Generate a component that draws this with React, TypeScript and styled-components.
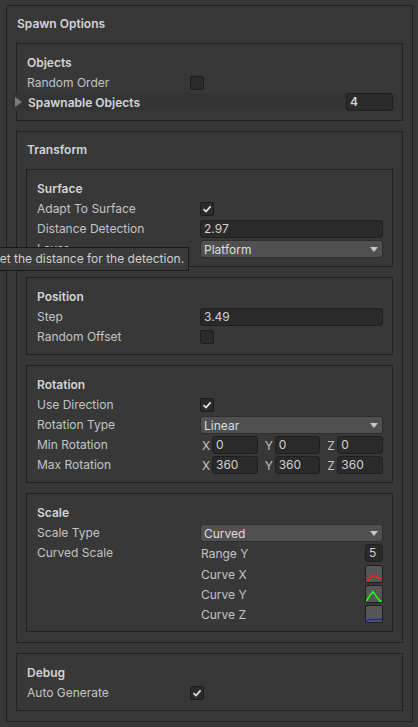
import React from "react";
import styled, { createGlobalStyle } from "styled-components";

const GlobalStyle = createGlobalStyle`
  body {
    margin: 0;
    background: #383838;
    font-family: Inter, "Noto Sans", sans-serif;
    font-size: 12px;
    color: #c4c4c4;
  }
`;

const Page = styled.div`
  padding: 5px 5px 7px 6px;
`;

const Box = styled.section<{ $leaf?: boolean }>`
  border: 1px solid #222222;
  padding: ${(p) => (p.$leaf ? "9px 9px 7px 10px" : "8px 9px 10px 9px")};
`;

const Heading = styled.div<{ $group?: boolean }>`
  height: 20px;
  line-height: 20px;
  font-weight: 600;
  color: #d4d4d4;
  padding-left: ${(p) => (p.$group ? "1px" : "0")};
  margin-bottom: ${(p) => (p.$group ? "9px" : "0")};
`;

const Stack = styled.div<{ $gap: number }>`
  display: flex;
  flex-direction: column;
  gap: ${(p) => p.$gap}px;
`;

const Row = styled.div`
  position: relative;
  display: grid;
  grid-template-columns: 163px 1fr;
  align-items: center;
  min-height: 20px;
`;

const Label = styled.span`
  white-space: nowrap;
  align-self: start;
  line-height: 20px;
`;

const Field = styled.div<{ $width?: number }>`
  box-sizing: border-box;
  height: 18px;
  width: ${(p) => (p.$width ? `${p.$width}px` : "auto")};
  flex: ${(p) => (p.$width ? "none" : "1")};
  background: #2a2a2a;
  border: 1px solid #1f1f1f;
  border-radius: 3px;
  padding: 0 3px;
  line-height: 16px;
  color: #d2d2d2;
`;

const Dropdown = styled.div`
  box-sizing: border-box;
  height: 18px;
  background: #505050;
  border: 1px solid #2e2e2e;
  border-radius: 3px;
  display: flex;
  align-items: center;
  justify-content: space-between;
  padding: 0 4px 0 3px;
  color: #dedede;

  &::after {
    content: "";
    border-left: 4px solid transparent;
    border-right: 4px solid transparent;
    border-top: 5px solid #c8c8c8;
  }
`;

const CheckBox = styled.div`
  box-sizing: border-box;
  width: 14px;
  height: 14px;
  background: #2b2b2b;
  border: 1px solid #1c1c1c;
  border-radius: 2px;
  display: flex;
  align-items: center;
  justify-content: center;
  color: #e4e4e4;
`;

const Foldout = styled.div`
  display: flex;
  align-items: center;
  height: 18px;
  margin: 0 -4px 2px -15px;
  padding: 0 4px 0 3px;
  background: #343434;
  font-weight: 600;
  color: #d4d4d4;

  &::before {
    content: "";
    border-top: 5px solid transparent;
    border-bottom: 5px solid transparent;
    border-left: 7px solid #7c7c7c;
    margin-right: 6px;
  }

  ${Field} {
    margin-left: auto;
  }
`;

const Vec3 = styled.div`
  display: grid;
  grid-template-columns: repeat(3, 1fr);
  gap: 5px;
`;

const VecCell = styled.div`
  display: flex;
  align-items: center;
`;

const Axis = styled.span`
  width: 12px;
  padding-left: 2px;
  box-sizing: border-box;
  flex: none;
`;

const SubList = styled.div`
  display: flex;
  flex-direction: column;
`;

const SubRow = styled.div<{ $spaced?: boolean }>`
  display: flex;
  align-items: center;
  justify-content: space-between;
  height: 20px;
  padding-left: 1px;
  margin-bottom: ${(p) => (p.$spaced ? "1px" : "0")};
`;

const Swatch = styled.svg`
  display: block;
  width: 18px;
  height: 18px;
  box-sizing: border-box;
  background: #565656;
  border: 1px solid #1e1e1e;
  border-radius: 2px;
`;

const Tooltip = styled.div`
  position: absolute;
  top: 8px;
  left: -49px;
  z-index: 2;
  box-sizing: border-box;
  height: 24px;
  padding: 0 4px 0 3px;
  line-height: 22px;
  white-space: nowrap;
  background: #3a3a3a;
  border: 1px solid #1b1b1b;
  color: #cfcfcf;
`;

const Check = () => (
  <CheckBox>
    <svg width="10" height="10" viewBox="0 0 10 10">
      <polyline
        points="1.5,5.2 4,7.6 8.6,2.4"
        fill="none"
        stroke="currentColor"
        strokeWidth="1.6"
      />
    </svg>
  </CheckBox>
);

const Curve = ({ points, color }: { points: string; color: string }) => (
  <Swatch viewBox="1 1 16 16">
    <polyline points={points} fill="none" stroke={color} strokeWidth="1.5" />
  </Swatch>
);

const XYZ = ({ x, y, z }: { x: string; y: string; z: string }) => (
  <Vec3>
    <VecCell>
      <Axis>X</Axis>
      <Field>{x}</Field>
    </VecCell>
    <VecCell>
      <Axis>Y</Axis>
      <Field>{y}</Field>
    </VecCell>
    <VecCell>
      <Axis>Z</Axis>
      <Field>{z}</Field>
    </VecCell>
  </Vec3>
);

const App = () => {
  return (
    <Page>
      <GlobalStyle />
      <Box>
        <Heading $group>Spawn Options</Heading>
        <Stack $gap={10}>
          <Box $leaf>
            <Heading>Objects</Heading>
            <Row>
              <Label>Random Order</Label>
              <CheckBox />
            </Row>
            <Foldout>
              Spawnable Objects
              <Field $width={47}>4</Field>
            </Foldout>
          </Box>

          <Box>
            <Heading $group>Transform</Heading>
            <Stack $gap={10}>
              <Box $leaf>
                <Heading>Surface</Heading>
                <Row>
                  <Label>Adapt To Surface</Label>
                  <Check />
                </Row>
                <Row>
                  <Label>Distance Detection</Label>
                  <Field>2.97</Field>
                </Row>
                <Row>
                  <Label>Layer</Label>
                  <Dropdown>Platform</Dropdown>
                  <Tooltip>Set the distance for the detection.</Tooltip>
                </Row>
              </Box>

              <Box $leaf>
                <Heading>Position</Heading>
                <Row>
                  <Label>Step</Label>
                  <Field>3.49</Field>
                </Row>
                <Row>
                  <Label>Random Offset</Label>
                  <CheckBox />
                </Row>
              </Box>

              <Box $leaf>
                <Heading>Rotation</Heading>
                <Row>
                  <Label>Use Direction</Label>
                  <Check />
                </Row>
                <Row>
                  <Label>Rotation Type</Label>
                  <Dropdown>Linear</Dropdown>
                </Row>
                <Row>
                  <Label>Min Rotation</Label>
                  <XYZ x="0" y="0" z="0" />
                </Row>
                <Row>
                  <Label>Max Rotation</Label>
                  <XYZ x="360" y="360" z="360" />
                </Row>
              </Box>

              <Box $leaf>
                <Heading>Scale</Heading>
                <Row>
                  <Label>Scale Type</Label>
                  <Dropdown>Curved</Dropdown>
                </Row>
                <Row>
                  <Label>Curved Scale</Label>
                  <SubList>
                    <SubRow $spaced>
                      Range Y
                      <Field $width={18}>5</Field>
                    </SubRow>
                    <SubRow>
                      Curve X
                      <Curve color="#ff1a1a" points="1,16.5 3,15.5 5,13 8,10 11,11.5 14,13 17,14.5" />
                    </SubRow>
                    <SubRow>
                      Curve Y
                      <Curve color="#1aff1a" points="1,16.5 4,12 8,6.5 12,12.5 15,16 17,16.5" />
                    </SubRow>
                    <SubRow>
                      Curve Z
                      <Curve color="#1a1aff" points="1,16.5 4,14.5 17,14.5" />
                    </SubRow>
                  </SubList>
                </Row>
              </Box>
            </Stack>
          </Box>

          <Box $leaf>
            <Heading>Debug</Heading>
            <Row>
              <Label>Auto Generate</Label>
              <Check />
            </Row>
          </Box>
        </Stack>
      </Box>
    </Page>
  );
};

export default App;
